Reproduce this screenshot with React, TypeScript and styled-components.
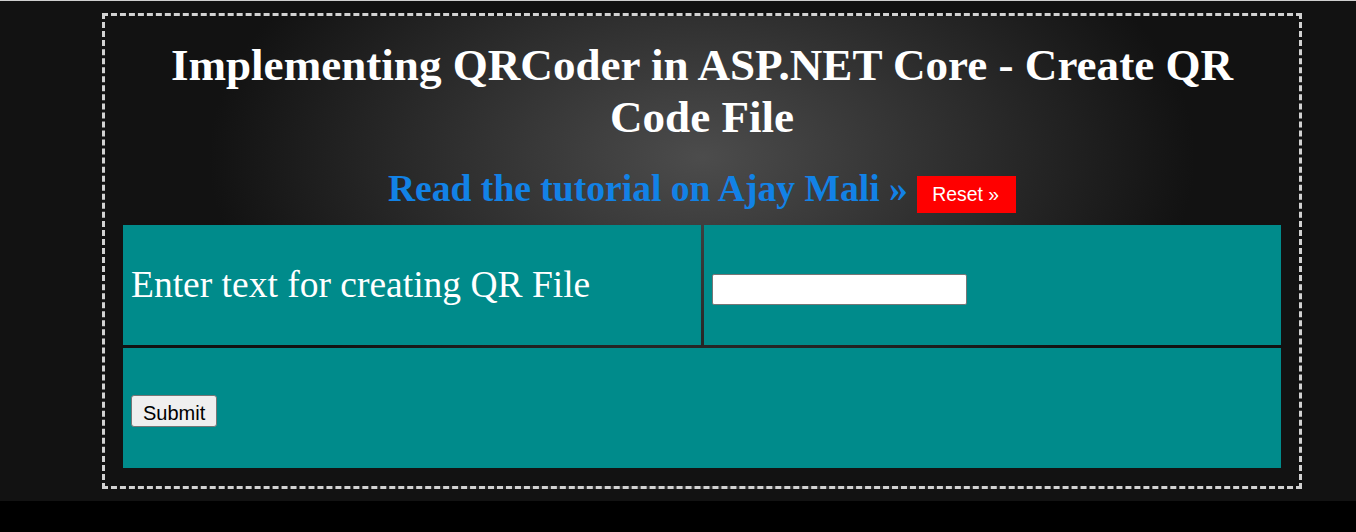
import React from "react";
import styled, { createGlobalStyle } from "styled-components";

const GlobalStyle = createGlobalStyle`
  html, body {
    margin: 0;
    padding: 0;
    background: #000;
  }
  body {
    font-family: "Liberation Serif", "Times New Roman", serif;
  }
`;

const Page = styled.div`
  background: #121212;
  border-top: 1px solid #cfcfcf;
  padding: 12px 0;
`;

const Frame = styled.div`
  box-sizing: border-box;
  width: 1200px;
  height: 476px;
  margin-left: 102px;
  border: 3px dashed #d2d2d2;
  padding: 0 15px 16px;
  background: radial-gradient(
    ellipse 560px 330px at 50% 30%,
    #4c4c4c 0%,
    #121212 88%
  );
`;

const Title = styled.h1`
  margin: 23px 0 0;
  font-size: 45.1px;
  font-weight: bold;
  line-height: normal;
  color: #fff;
  text-align: center;
`;

const LinkRow = styled.p`
  margin: 24px 0 9px;
  font-size: 37.6px;
  font-weight: bold;
  line-height: normal;
  text-align: center;
`;

const TutorialLink = styled.a`
  color: #1282e6;
  text-decoration: none;
`;

const ResetButton = styled.a`
  display: inline-block;
  padding: 7px 17px 7px 15px;
  background: #ff0000;
  color: #fff;
  font-family: "Liberation Sans", Arial, sans-serif;
  font-size: 19.4px;
  font-weight: normal;
  line-height: 23px;
  text-decoration: none;
`;

const FormTable = styled.table`
  width: 100%;
  table-layout: fixed;
  border-collapse: separate;
  border-spacing: 3px;
`;

const Cell = styled.td`
  padding: 38.4px 8px;
  background: #008b8b;
  color: #fff;
  font-size: 37.5px;
  vertical-align: middle;
`;

const TextInput = styled.input`
  box-sizing: border-box;
  width: 255px;
  height: 31px;
  padding: 4px 2px 2px;
  border: 1px solid #767676;
  border-radius: 2px;
  background: #fff;
  font-family: "Liberation Sans", Arial, sans-serif;
  font-size: 20px;
  line-height: 23px;
  vertical-align: baseline;
  outline: none;
`;

const SubmitButton = styled.button`
  box-sizing: border-box;
  height: 32px;
  padding: 6px 11px 2px;
  border: 1px solid #767676;
  border-radius: 3px;
  background: #efefef;
  color: #000;
  font-family: "Liberation Sans", Arial, sans-serif;
  font-size: 20px;
  line-height: 22px;
  vertical-align: baseline;
`;

export default function App() {
  return (
    <>
      <GlobalStyle />
      <Page>
        <Frame>
          <Title>Implementing QRCoder in ASP.NET Core - Create QR Code File</Title>
          <LinkRow>
            <TutorialLink href="#">Read the tutorial on Ajay Mali »</TutorialLink>{" "}
            <ResetButton href="#">Reset »</ResetButton>
          </LinkRow>
          <form onSubmit={(e) => e.preventDefault()}>
            <FormTable>
              <tbody>
                <tr>
                  <Cell>Enter text for creating QR File</Cell>
                  <Cell>
                    <TextInput type="text" name="qrText" />
                  </Cell>
                </tr>
                <tr>
                  <Cell colSpan={2}>
                    <SubmitButton type="submit">Submit</SubmitButton>
                  </Cell>
                </tr>
              </tbody>
            </FormTable>
          </form>
        </Frame>
      </Page>
    </>
  );
}
